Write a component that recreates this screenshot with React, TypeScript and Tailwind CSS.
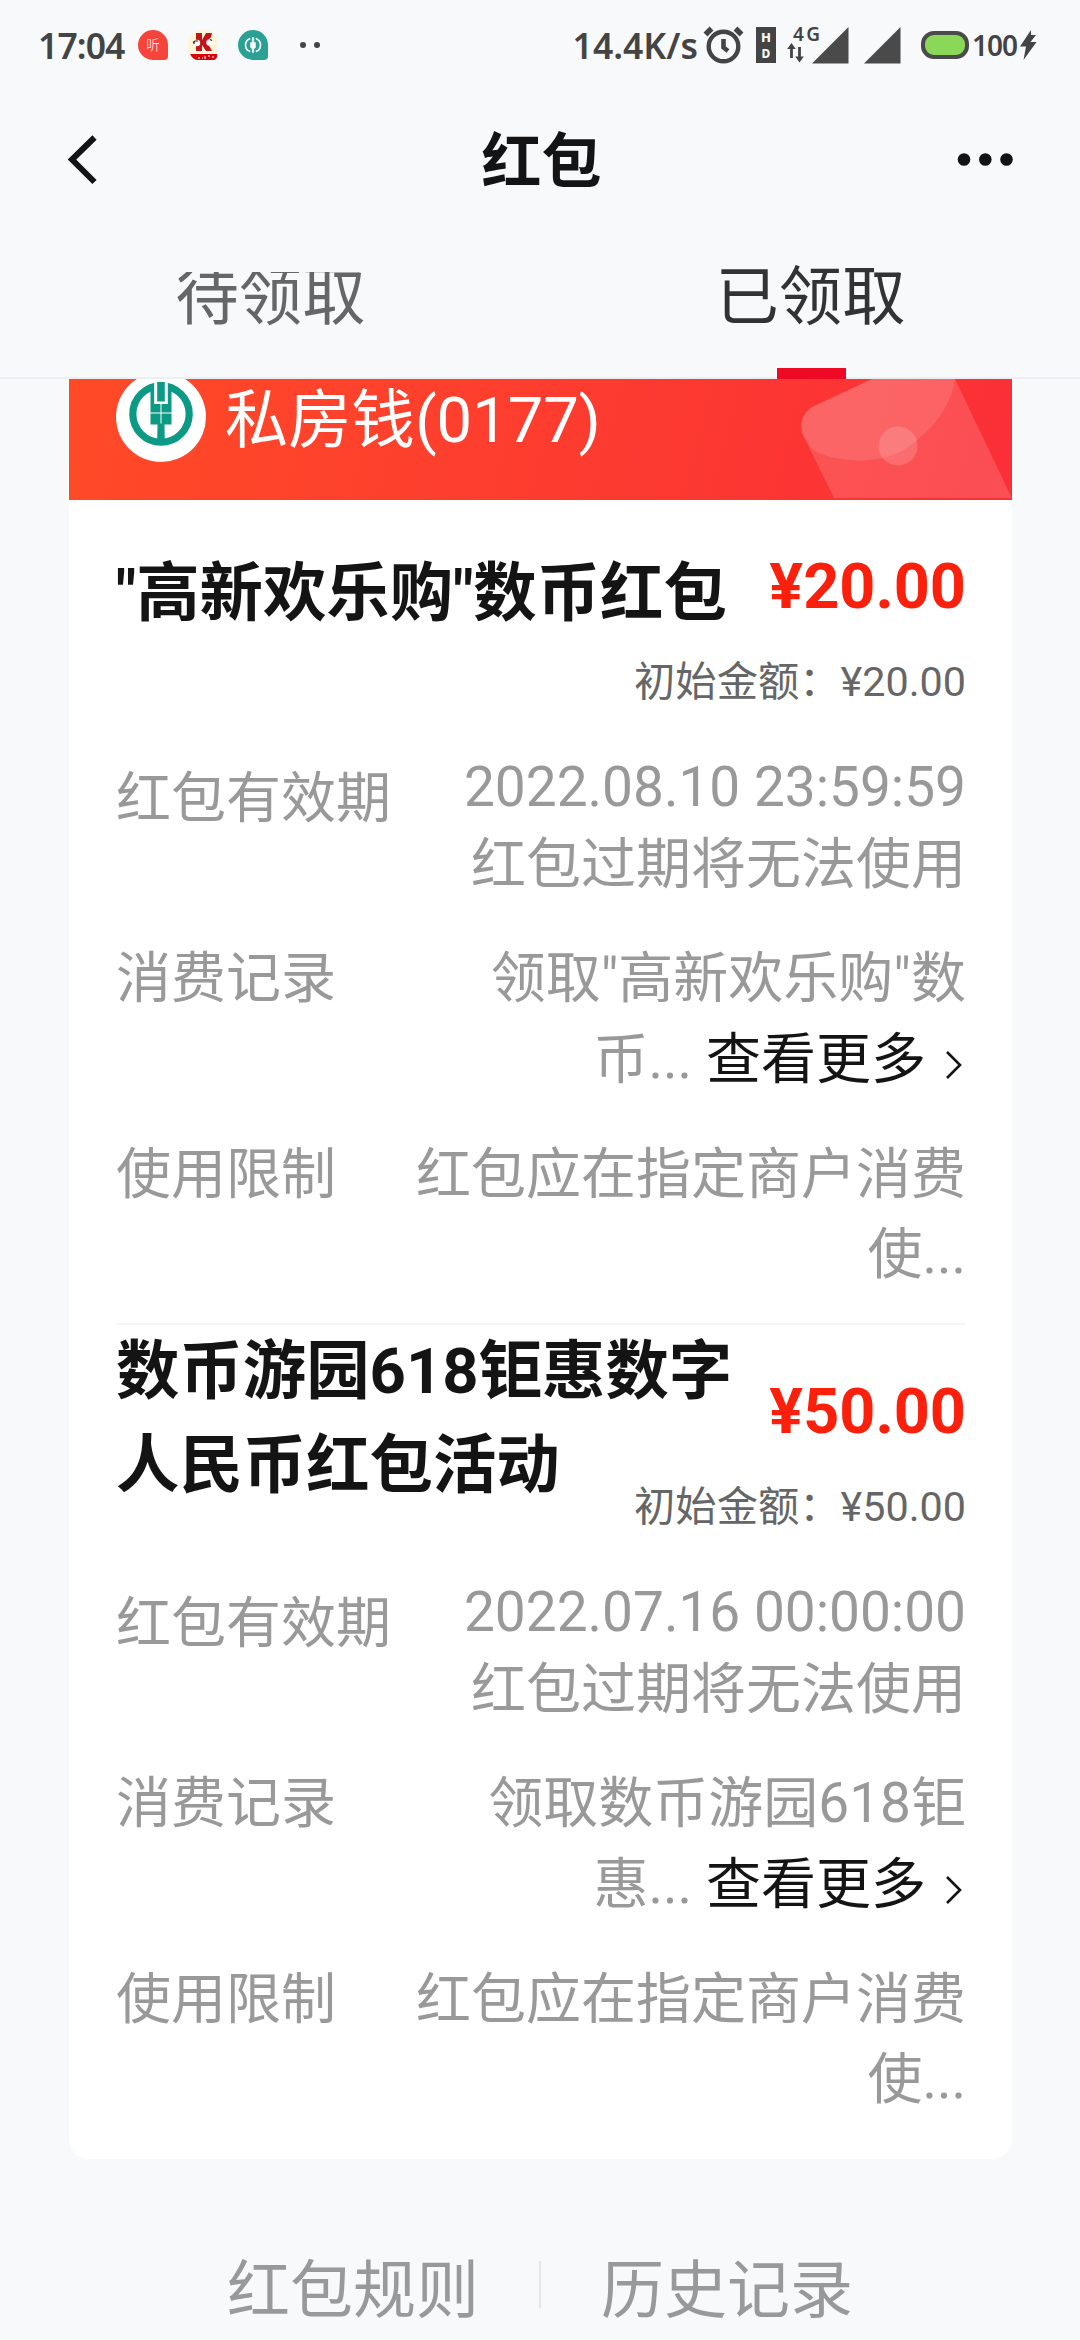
import { useState } from 'react'
import clsx from 'clsx'

type RedPacket = {
  title: string
  amount: string
  expires: string
  record: string[]
}

const PACKETS: RedPacket[] = [
  {
    title: '"高新欢乐购"数币红包',
    amount: '¥20.00',
    expires: '2022.08.10 23:59:59',
    record: ['领取"高新欢乐购"数', '币...'],
  },
  {
    title: '数币游园618钜惠数字人民币红包活动',
    amount: '¥50.00',
    expires: '2022.07.16 00:00:00',
    record: ['领取数币游园618钜', '惠...'],
  },
]

const TABS = ['待领取', '已领取']

function StatusBar() {
  return (
    <div className="flex h-[90px] items-center pl-[38px] pr-[43px] font-['Noto_Sans',sans-serif] text-[#444444]">
      <span className="w-[100px] text-[35.5px] font-semibold leading-[48px] tracking-[-0.9px]">17:04</span>
      <svg className="h-[30px] w-[30px]" viewBox="0 0 30 30">
        <path d="M15 0a15 15 0 0 1 15 15v11a4 4 0 0 1-4 4H15a15 15 0 0 1 0-30z" fill="#f6443a" />
        <text x="15" y="20" textAnchor="middle" fontSize="13.5" fontWeight="300" fill="#fff" fontFamily="Noto Sans CJK SC">听</text>
      </svg>
      <svg className="ml-[17px] h-[32px] w-[34px]" viewBox="0 0 34 32">
        <circle cx="18" cy="16" r="15.5" fill="#fdf6d8" />
        <path d="M11 4h6v7l4-7h6l-1 4-4 5 5 9h-6l-4-6v6h-6z" fill="#c4141b" />
        <circle cx="12" cy="14" r="3.2" fill="#fff" />
        <circle cx="24.5" cy="13.500" r="3.2" fill="#fff" />
        <path d="M8 13.500l2-1.500h3M25 10.500l2 1M9 13v2" fill="none" stroke="#4a1510" strokeWidth="1.2" />
        <path d="M5 25h27v3.500l-2.500 2.500H13q-5 0-8-6z" fill="#d8040d" />
        <path d="M13 29h2m2 0h1m2-2v3m3-3h2m3 0v2" stroke="#fff" strokeWidth="1" />
      </svg>
      <svg className="ml-[19px] h-[30px] w-[30px]" viewBox="0 0 30 30">
        <path d="M15 0a15 15 0 0 1 15 15v11a4 4 0 0 1-4 4H15a15 15 0 0 1 0-30z" fill="#2ba195" />
        <path d="M12.2 8.400a7 7 0 0 0 0 13.2M17.800 8.400a7 7 0 0 1 0 13.2" fill="none" stroke="#fff" strokeWidth="1.600" />
        <path d="M14.300 7.500h1.400v5h1.800v5L15.700 19v3.500h-1.400V19l-1.800-1.500v-5h1.800z" fill="#fff" stroke="#fff" strokeWidth=".5" />
      </svg>
      <svg className="ml-[32px] h-[8px] w-[24px]" viewBox="0 0 24 8">
        <circle cx="3" cy="4" r="3" fill="#444" />
        <circle cx="17" cy="4" r="3" fill="#444" />
      </svg>

      <div className="ml-auto flex items-center">
        <span className="text-[35.5px] font-semibold leading-[48px]">14.4K/s</span>
        <svg className="ml-[5px] h-[38px] w-[42px]" viewBox="0 0 42 38" fill="none" stroke="#444">
          <circle cx="20.500" cy="20.500" r="14.800" strokeWidth="4.400" />
          <path d="M2.500 8.500l6-6M38.500 8.500l-6-6" strokeWidth="5.500" />
          <path d="M20.500 13v8.500l4.500 3.500" strokeWidth="4.600" />
        </svg>
        <svg className="ml-[11px] h-[36px] w-[20px]" viewBox="0 0 20 36">
          <rect width="20" height="36" fill="#444" />
          <text x="5" y="14.500" fontSize="13" fontWeight="800" fill="#f7f9fb" fontFamily="Noto Sans">H</text>
          <text x="5.500" y="30.500" fontSize="12" fontWeight="800" fill="#f7f9fb" fontFamily="Noto Sans">D</text>
        </svg>
        {/* 4G label sits over the first signal triangle */}
        <svg className="ml-[11px] h-[38px] w-[62px] overflow-visible" viewBox="0 0 62 38">
          <path d="M61.500 1v36.500H25z" fill="#4a4a4a" />
          <text x="6" y="15" fontSize="19" fontWeight="600" fill="#444" fontFamily="Noto Sans" textLength="27">4G</text>
          <path d="M4.500 32V21M12.500 21v10" stroke="#444" strokeWidth="2.800" />
          <path d="M.2 23L4.500 17l4.300 6zM8.200 30.500l4.300 6 4.300-6z" fill="#444" />
        </svg>
        <svg className="ml-[14px] h-[38px] w-[38px]" viewBox="0 0 38 38">
          <path d="M37.500 1v36.500H1z" fill="#4a4a4a" />
        </svg>
        <div className="ml-[20px] h-[28px] w-[48px] rounded-[13px] border-[4.5px] border-[#4a4a4a] bg-[#8ad857]" />
        <span className="ml-[3px] text-[28px] font-semibold leading-[38px] tracking-[-1px]">100</span>
        <svg className="ml-[2px] h-[30px] w-[18px]" viewBox="0 0 18 30">
          <path d="M12 0L1 16.500h6L4.500 30 17.500 12h-6L17 5h-5z" fill="#444" />
        </svg>
      </div>
    </div>
  )
}

function NavBar() {
  return (
    <div className="flex h-[140px] items-center justify-between pl-[67px] pr-[66px]">
      <svg className="h-[52px] w-[34px]" viewBox="0 0 34 52" fill="none" stroke="#141414" strokeWidth="6">
        <path d="M27.500 3.500L5 25.500l22.500 22.500" />
      </svg>
      <h1 className="ml-[26px] mt-[5px] text-[60px] font-bold leading-[80px] text-[#141414]">红包</h1>
      <svg className="h-[14px] w-[58px]" viewBox="0 0 58 14" fill="#141414">
        <circle cx="8" cy="6.500" r="6.300" />
        <circle cx="29.300" cy="6.500" r="6.300" />
        <circle cx="50.500" cy="6.500" r="6.300" />
      </svg>
    </div>
  )
}

function BankLogo() {
  return (
    <svg className="-mt-[7px] h-[90px] w-[90px] shrink-0" viewBox="-45 -42 90 90">
      <circle cx="0" cy="3" r="45" fill="#fff" />
      <circle r="28.200" fill="none" stroke="#0d9a84" strokeWidth="7.200" />
      <path d="M-10.500-26h21V10.500h-7L3.800 27h-7.600L-3.500 10.500h-7z" fill="#0d9a84" />
      <path d="M-6.800-33H6.800v23H-6.800z" fill="#fff" />
      <path d="M-3.800-32h7.600v19.500h-7.600z" fill="#0d9a84" />
      <path d="M0-11v20.500M-11-1h22" stroke="#fff" strokeWidth="1" />
    </svg>
  )
}

function AccountBanner() {
  return (
    <div className="relative flex h-[121px] items-start overflow-hidden bg-linear-[105deg,#ff4a26,#fb2f38] pl-[47px]">
      <svg className="absolute inset-0 h-[121px] w-[943px]" viewBox="0 0 943 121">
        <path
          d="M803 0H886L942.800 119H765L733 54Q729 38 743 28Z"
          fill="#fff"
          fillOpacity=".15"
        />
        <path
          d="M803 0H886C882 26 867 46 848 61C836 72 820 80 795 81.500C775 82 753 78 742 69L733 54Q729 38 743 28Z"
          fill="#fff"
          fillOpacity=".11"
        />
        <circle cx="829" cy="67" r="19.500" fill="#fff" fillOpacity=".16" />
      </svg>
      <BankLogo />
      <span className="ml-[19px] text-[63.3px] leading-[82px] text-white">私房钱(0177)</span>
    </div>
  )
}

function PacketItem({ packet, last }: { packet: RedPacket; last: boolean }) {
  return (
    <section
      className={clsx(
        'flex h-[825px] flex-col text-[55px] text-[#999999]',
        !last && 'border-b-2 border-[#f4f5f6]'
      )}
    >
      <div className="flex h-[188px] shrink-0 items-center">
        <h2 className="mb-[2px] w-[630px] shrink-0 text-[63.4px] font-bold leading-[94px] text-[#141414]">
          {packet.title}
        </h2>
        <div className="mt-[51px] flex min-w-0 flex-1 flex-col items-end gap-[31px] self-start whitespace-nowrap">
          <span className="text-[63px] font-bold leading-[72px] text-[#fa200c]">{packet.amount}</span>
          <span className="text-[41.3px] leading-[56px] text-[#666666]">初始金额：{packet.amount}</span>
        </div>
      </div>

      <div className="mt-[61px] flex justify-between leading-[77px]">
        <span className="pt-[11px]">红包有效期</span>
        <div className="text-right">
          <p>{packet.expires}</p>
          <p>红包过期将无法使用</p>
        </div>
      </div>

      <div className="mt-[35px] flex justify-between leading-[81px]">
        <span>消费记录</span>
        <div className="text-right">
          <p>{packet.record[0]}</p>
          <button type="button" className="flex w-full items-center justify-end">
            <span>{packet.record[1]}</span>
            <span className="ml-[14px] text-[#141414]">查看更多</span>
            <svg className="ml-[19px] mr-[3px] mt-[10px] h-[30px] w-[18px]" viewBox="0 0 18 30" fill="none" stroke="#141414" strokeWidth="2.600">
              <path d="M2 2l13 13L2 28" />
            </svg>
          </button>
        </div>
      </div>

      <div className="mt-[34px] flex justify-between leading-[80px]">
        <span>使用限制</span>
        <div className="text-right">
          <p>红包应在指定商户消费</p>
          <p>使...</p>
        </div>
      </div>
    </section>
  )
}

export default function App() {
  const [tab, setTab] = useState(1)

  return (
    <div className="h-[2340px] w-[1080px] overflow-hidden bg-[#f7f9fb] font-[Roboto,'Noto_Sans_CJK_SC',sans-serif]">
      <StatusBar />
      <NavBar />

      <div className="flex h-[149px] border-b-2 border-[#eceff1]">
        {TABS.map((label, i) => (
          <button
            key={label}
            type="button"
            onClick={() => setTab(i)}
            className={clsx(
              'flex flex-1 flex-col items-center',
              tab === i ? 'text-[#333333]' : 'text-[#666666]'
            )}
          >
            <span
              className={clsx(
                'ml-[1px] mt-[26px] h-[112px] text-[63.3px] leading-[82px]',
                tab !== i && '[clip-path:inset(16px_0_0_0)]'
              )}
            >
              {label}
            </span>
            {tab === i && <span className="-mb-[2px] ml-[2px] h-[11px] w-[69px] shrink-0 bg-[#ee0a24]" />}
          </button>
        ))}
      </div>

      <main className="ml-[69px] mr-[68px] overflow-hidden rounded-b-[20px] bg-white">
        <AccountBanner />
        <div className="pb-[9px] pl-[47px] pr-[46px]">
          {PACKETS.map((p, i) => (
            <PacketItem key={p.title} packet={p} last={i === PACKETS.length - 1} />
          ))}
        </div>
      </main>

      <footer className="mt-[90px] flex items-start justify-center text-[63px] leading-[84px] text-[#999999]">
        <span>红包规则</span>
        <span className="mx-[60px] mt-[12px] h-[47px] w-[2px] bg-[#e3e5e7]" />
        <span>历史记录</span>
      </footer>
    </div>
  )
}
